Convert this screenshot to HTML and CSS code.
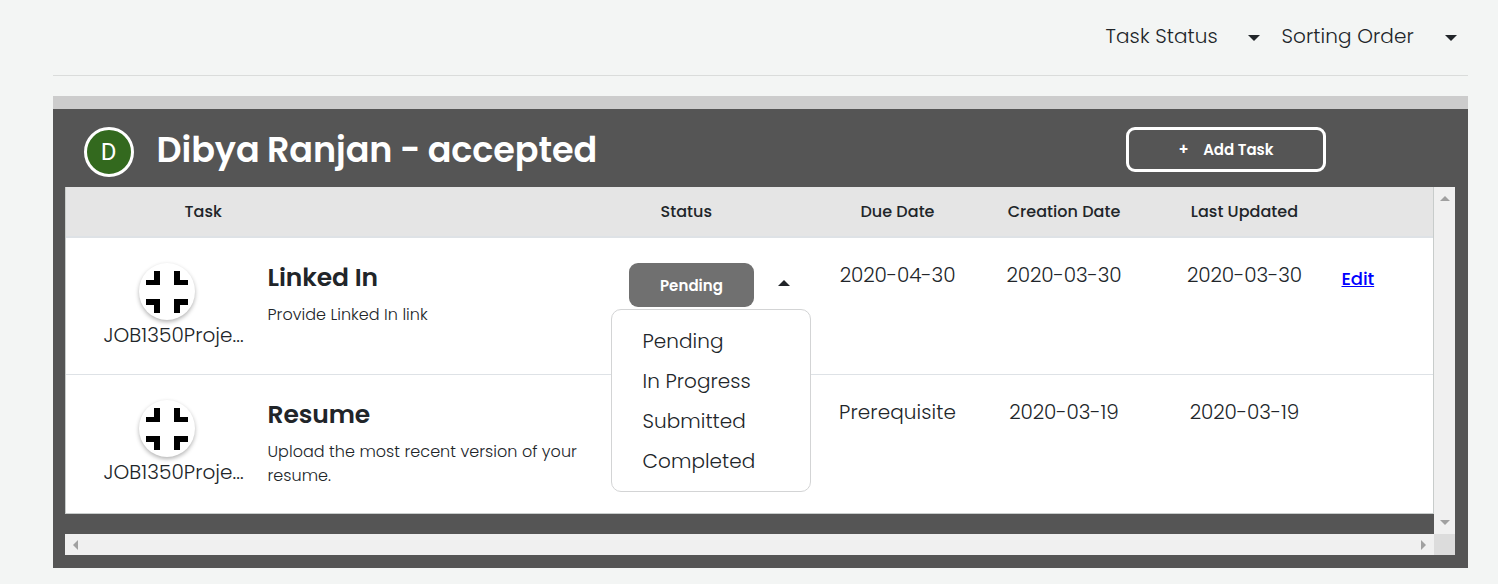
FILE: index.html
```html
<!DOCTYPE html>
<html lang="en">
<head>
<meta charset="utf-8">
<title>Tasks</title>
<link rel="stylesheet" href="styles.css">
</head>
<body>
<div class="page">
  <header class="filters">
    <div class="filter filter-status"><span>Task Status</span><i class="caret"></i></div>
    <div class="filter filter-order"><span>Sorting Order</span><i class="caret"></i></div>
  </header>
  <div class="strip"></div>
  <section class="panel">
    <div class="panel-head">
      <div class="avatar">D</div>
      <h1 class="name">Dibya Ranjan - accepted</h1>
      <button class="add"><span>+</span><span class="add-label">Add Task</span></button>
    </div>
    <div class="scroller">
      <div class="view">
        <div class="table">
          <div class="row head">
            <div class="h-task">Task</div><div></div><div class="h-status">Status</div>
            <div class="h-date">Due Date</div><div class="h-date">Creation Date</div><div class="h-date">Last Updated</div><div></div>
          </div>
          <div class="row item">
            <div class="job">
              <div class="disc"><svg width="42" height="42" viewBox="0 0 42 42"><path d="M8 0h6v14H0V9h8zM28 0h6v9h8v5H28zM0 28h14v14H8v-8H0zM28 28h14v6h-8v8h-6z"/></svg></div>
              <span class="job-name">JOB1350Proje...</span>
            </div>
            <div class="info"><h2>Linked In</h2><p>Provide Linked In link</p></div>
            <div class="status">
              <button class="pill">Pending</button><i class="caret up"></i>
              <div class="menu"><span>Pending</span><span>In Progress</span><span>Submitted</span><span>Completed</span></div>
            </div>
            <div class="date">2020-04-30</div><div class="date">2020-03-30</div><div class="date">2020-03-30</div>
            <div><a class="edit" href="#">Edit</a></div>
          </div>
          <div class="row item last">
            <div class="job">
              <div class="disc"><svg width="42" height="42" viewBox="0 0 42 42"><path d="M8 0h6v14H0V9h8zM28 0h6v9h8v5H28zM0 28h14v14H8v-8H0zM28 28h14v6h-8v8h-6z"/></svg></div>
              <span class="job-name">JOB1350Proje...</span>
            </div>
            <div class="info"><h2>Resume</h2><p>Upload the most recent version of your<br>resume.</p></div>
            <div></div>
            <div class="date prereq">Prerequisite</div><div class="date">2020-03-19</div><div class="date">2020-03-19</div>
            <div></div>
          </div>
        </div>
      </div>
      <div class="vbar"><i class="arrow a-up"></i><i class="arrow a-down"></i></div>
      <div class="hbar"><i class="arrow a-left"></i><i class="arrow a-right"></i></div>
      <div class="corner"></div>
    </div>
  </section>
</div>
</body>
</html>
```
FILE: styles.css
```css
* { box-sizing: border-box; }
body { margin: 0; background: #f3f5f4; color: #212529; font: 300 20px/30px Poppins, Inter, sans-serif; }
h1, h2, p { margin: 0; }
button { font-family: inherit; padding: 0; }
.page { height: 584px; padding: 0 30px 16px 53px; overflow: hidden; white-space: nowrap; }
.filters { height: 76px; border-bottom: 1px solid #dadcdb; display: flex; justify-content: flex-end; gap: 21.5px; padding: 21px 11px 0 0; letter-spacing: .1px; }
.filter { display: flex; justify-content: space-between; height: 30px; }
.filter-status { width: 154.5px; }
.filter-order { width: 175.5px; }
.caret { border: 6px solid transparent; border-top-color: #212529; border-bottom: 0; height: 6px; margin-top: 14px; }
.caret.up { border-top: 0; border-bottom: 6px solid #212529; margin: 17px 0 0 24px; }
.strip { height: 13px; margin-top: 20px; background: #ccc; }
.panel { height: 459px; background: #555; padding: 0 13px 13px 12px; }
.panel-head { height: 78px; display: flex; padding: 18px 129px 0 19px; color: #fff; }
.avatar { width: 50px; height: 50px; border: 3px solid #fff; border-radius: 50%; background: #33691e; font: 400 24px/45px Roboto, sans-serif; text-align: center; padding-right: 1px; }
.name { margin-left: 22.5px; font-size: 35px; line-height: 46px; font-weight: 600; letter-spacing: -.08px; word-spacing: -.8px; }
.add { margin-left: auto; width: 200px; height: 45px; border: 3px solid #fff; border-radius: 9px; background: none; color: #fff; font-size: 15px; font-weight: 600; display: flex; align-items: center; padding-left: 49.5px; }
.add-label { margin-left: 14.5px; }
.scroller { display: grid; grid-template-columns: 1369px 21px; grid-template-rows: 347px 21px; }
.table { height: 327px; border: 1px solid #c8cccb; border-top: 0; background: #fff; }
.row { display: grid; grid-template-columns: 201px 344px 204px 165px 168px 193px 1fr; }
.head { height: 51px; border-bottom: 2px solid #dee2e6; background: #e5e5e5; font-size: 16px; line-height: 24px; font-weight: 500; padding-top: 13px; letter-spacing: .04px; }
.h-task { padding-left: 118.5px; }
.h-status { padding-left: 49.5px; }
.h-date, .date { text-align: center; }
.item { height: 137px; border-bottom: 1px solid #dee2e6; }
.item.last { border-bottom: 0; }
.job { padding: 25px 0 0 37.5px; }
.disc { width: 56px; height: 57px; margin: 0 0 0 35.5px; border-radius: 50%; box-shadow: 0 2px 4px rgba(0,0,0,.3); display: grid; place-items: center; }
.job-name { display: block; letter-spacing: .06px; }
.info { padding: 23px 0 0 .5px; }
.info h2 { font-size: 25px; line-height: 33px; font-weight: 600; letter-spacing: -.1px; }
.info p { font-size: 16px; line-height: 24px; margin-top: 9px; letter-spacing: .04px; }
.status { position: relative; padding: 25px 0 0 18px; display: flex; align-items: flex-start; }
.pill { width: 125px; height: 44px; border: 0; border-radius: 9px; background: #707070; color: #fff; font-size: 15px; font-weight: 600; letter-spacing: .05px; }
.menu { position: absolute; z-index: 2; left: 0; top: 71px; width: 200px; height: 183px; border: 1px solid #d3d4d5; border-radius: 10px; background: #fff; padding: 11px 30.5px; display: flex; flex-direction: column; line-height: 40px; letter-spacing: .06px; }
.date { padding-top: 22px; letter-spacing: -.12px; }
.date.prereq { letter-spacing: .1px; }
.edit { display: inline-block; margin: 26px 0 0 .5px; color: #00f; font-size: 18px; font-weight: 500; text-decoration: underline; letter-spacing: -.1px; }
.vbar { background: #f0f0f0; display: flex; flex-direction: column; align-items: center; justify-content: space-between; padding: 9px 0; }
.hbar { background: #f0f0f0; display: flex; align-items: center; justify-content: space-between; padding: 0 8px; }
.corner { background: #dcdcdc; }
.arrow { border: 5px solid transparent; }
.a-up { border-bottom-color: #a0a0a0; border-top: 0; }
.a-down { border-top-color: #a0a0a0; border-bottom: 0; }
.a-left { border-right-color: #a0a0a0; border-left: 0; }
.a-right { border-left-color: #a0a0a0; border-right: 0; }
```
